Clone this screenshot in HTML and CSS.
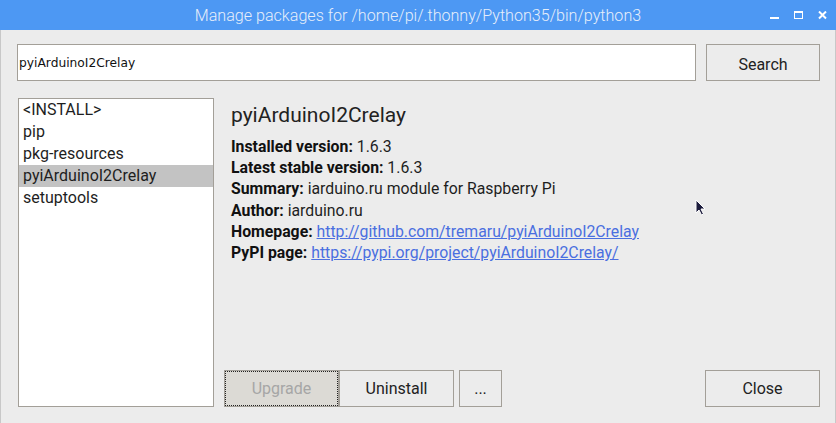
FILE: index.html
```html
<!DOCTYPE html>
<html>
  <head>
    <meta charset="utf-8" />
    <link rel="stylesheet" href="styles.css">
    <title>Manage packages</title>
  </head>
  <body>
    <div class="window">
      <div class="titlebar">
        <span class="title">Manage packages for /home/pi/.thonny/Python35/bin/python3</span>
        <div class="controls">
          <svg width="10" height="10" viewBox="0 0 10 10"><rect x="0" y="6" width="9" height="2" fill="#fff"/></svg>
          <svg width="10" height="10" viewBox="0 0 10 10"><rect x="0.5" y="0.5" width="8" height="7" fill="none" stroke="#fff"/><rect x="0" y="0" width="9" height="2" fill="#fff"/></svg>
          <svg width="10" height="10" viewBox="0 0 10 10"><path d="M1 0.5 L8 7.5 M8 0.5 L1 7.5" stroke="#fff" stroke-width="2"/></svg>
        </div>
      </div>

      <div class="body">
        <div class="search-row">
          <input class="entry" type="text" value="pyiArduinoI2Crelay">
          <button class="btn search">Search</button>
        </div>

        <div class="main-row">
          <ul class="list">
            <li>&lt;INSTALL&gt;</li>
            <li>pip</li>
            <li>pkg-resources</li>
            <li class="sel">pyiArduinoI2Crelay</li>
            <li>setuptools</li>
          </ul>

          <div class="right">
            <div class="info">
              <h2>pyiArduinoI2Crelay</h2>
              <div><b>Installed version:</b> 1.6.3</div>
              <div><b>Latest stable version:</b> 1.6.3</div>
              <div><b>Summary:</b> iarduino.ru module for Raspberry Pi</div>
              <div><b>Author:</b> iarduino.ru</div>
              <div><b>Homepage:</b> <a href="#">http://github.com/tremaru/pyiArduinoI2Crelay</a></div>
              <div><b>PyPI page:</b> <a href="#">https://pypi.org/project/pyiArduinoI2Crelay/</a></div>
            </div>

            <div class="buttons">
              <button class="btn wide disabled">Upgrade</button>
              <button class="btn wide">Uninstall</button>
              <button class="btn dots">...</button>
              <span class="spacer"></span>
              <button class="btn close">Close</button>
            </div>
          </div>
        </div>
      </div>

      <svg class="pointer" width="14" height="18" viewBox="0 0 14 18">
        <path d="M1 1 L1 14 L4 11 L6.5 16 L8.5 15 L6 10 L10 10 Z" fill="#1c1c3c" stroke="#fff" stroke-width="1"/>
      </svg>
    </div>
  </body>
</html>
```

FILE: styles.css
```css
* {
  box-sizing: border-box;
}
html, body {
  margin: 0;
  padding: 0;
  background: #ececec;
}
.window {
  position: relative;
  width: 836px;
  height: 423px;
  background: #ececec;
  border-left: 1px solid #c8c8c8;
  border-right: 1px solid #c8c8c8;
  font-family: Roboto, "Liberation Sans", sans-serif;
  color: #1e1e1e;
}
.titlebar {
  height: 30px;
  background: #4d98f3;
  display: flex;
  align-items: center;
  justify-content: center;
  position: relative;
  margin: 0 -1px;
}
.title {
  color: #e6eefa;
  font-size: 16.1px;
  font-weight: 300;
}
.controls {
  position: absolute;
  right: 8px;
  top: 11px;
  display: flex;
  gap: 14px;
}
.body {
  padding: 14px 15px 16px 16px;
  display: flex;
  flex-direction: column;
  height: 393px;
}
.search-row {
  display: flex;
  height: 37px;
  gap: 10px;
}
.entry {
  flex: 1;
  height: 37px;
  margin: 0;
  border: 1px solid #a39f98;
  background: #fff;
  padding: 0 1px;
  font-family: "DejaVu Sans", sans-serif;
  font-size: 12.25px;
  color: #111;
  outline: none;
}
.btn {
  height: 37px;
  margin: 0;
  border: 1px solid #a39f98;
  background: #ececec;
  font-family: Roboto, "Liberation Sans", sans-serif;
  font-size: 16px;
  color: #222;
  padding: 0;
}
.search {
  width: 114px;
  padding-top: 3px;
}
.main-row {
  display: flex;
  flex: 1;
  margin-top: 17px;
  gap: 10px;
}
.list {
  list-style: none;
  margin: 0 0 0 1px;
  padding: 0;
  width: 196px;
  border: 1px solid #a39f98;
  background: #fff;
  font-size: 16px;
}
.list li {
  height: 22px;
  line-height: 22px;
  padding-left: 4px;
}
.list .sel {
  background: #c3c3c3;
}
.right {
  flex: 1;
  display: flex;
  flex-direction: column;
}
.info {
  flex: 1;
  padding: 5px 0 0 7px;
  font-size: 15.8px;
  line-height: 21.2px;
}
.info h2 {
  margin: 0 0 9px;
  font-size: 21px;
  font-weight: 400;
  line-height: 24px;
  color: #222;
}
.info b {
  font-weight: 700;
  color: #111;
}
.info a {
  color: #4a6fe0;
  text-decoration: underline;
}
.buttons {
  display: flex;
  height: 37px;
}
.wide {
  width: 115px;
}
.disabled {
  background: #dcdad5;
  color: #a6a6a6;
  outline: 1px dotted #222;
  outline-offset: -2px;
}
.dots {
  width: 43px;
  margin-left: 5px;
}
.spacer {
  flex: 1;
}
.close {
  width: 115px;
}
.pointer {
  position: absolute;
  left: 694px;
  top: 199px;
}
```
